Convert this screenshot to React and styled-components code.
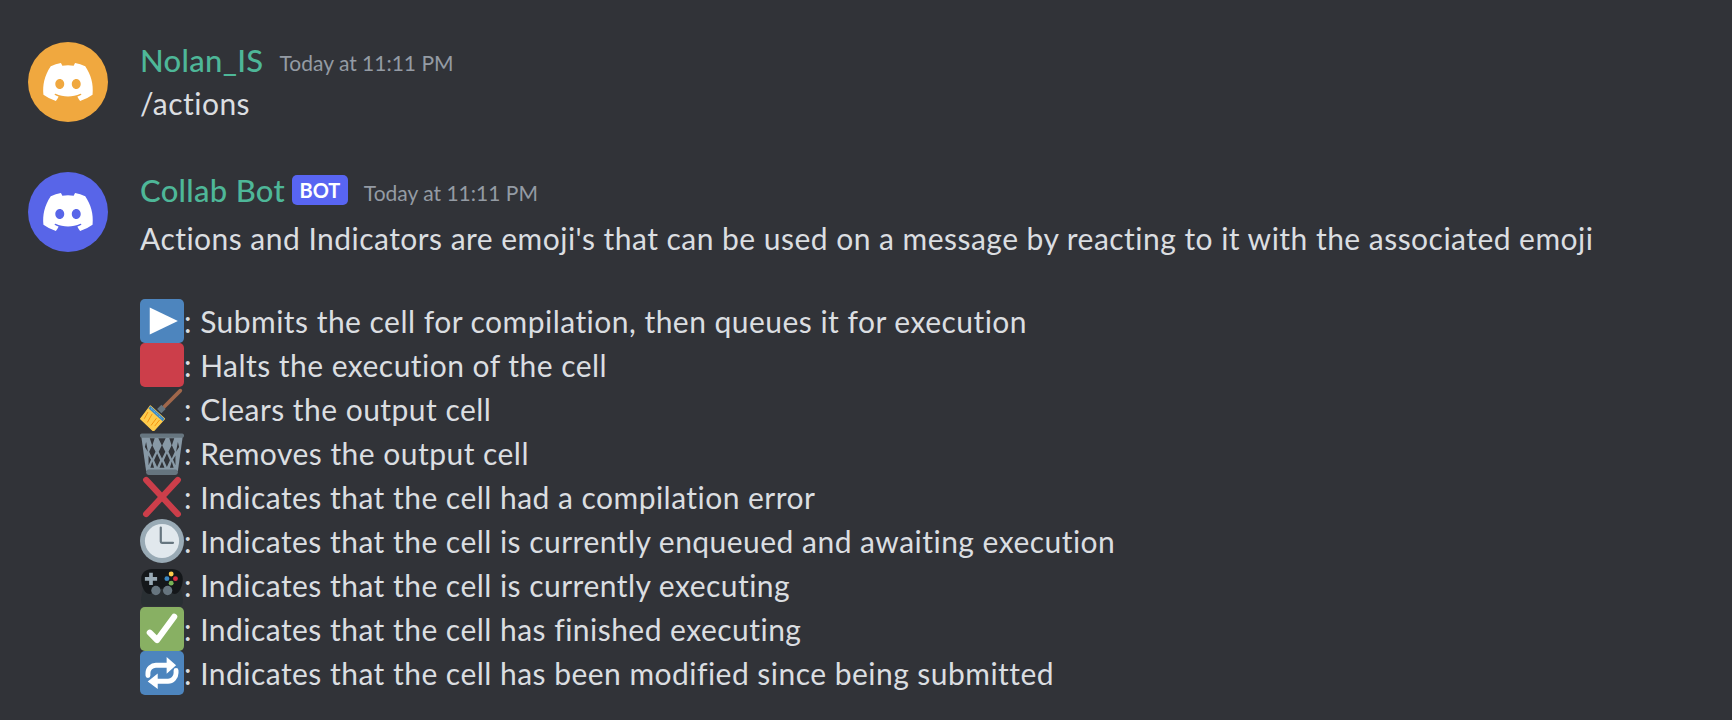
import styled, { createGlobalStyle } from "styled-components";
import { FaDiscord } from "react-icons/fa";

const Global = createGlobalStyle`
  html, body {
    margin: 0;
    padding: 0;
    background: #313338;
  }
`;

const Page = styled.main`
  width: 1732px;
  height: 720px;
  overflow: hidden;
  box-sizing: border-box;
  padding: 42px 0 0 28px;
  background: #313338;
  color: #dbdee1;
  font-family: Lato, "Noto Sans", sans-serif;
  display: flex;
  flex-direction: column;
  gap: 50px;
`;

const Message = styled.article`
  display: flex;
  gap: 32px;
  align-items: flex-start;
`;

const Avatar = styled.div`
  width: 80px;
  height: 80px;
  flex: none;
  border-radius: 50%;
  background: ${({ $color }) => $color};
  color: #fff;
  display: flex;
  align-items: center;
  justify-content: center;
`;

const Body = styled.div`
  display: flex;
  flex-direction: column;
`;

const Header = styled.div`
  display: flex;
  align-items: center;
  height: 36px;
  margin-bottom: ${({ $gap }) => $gap}px;
`;

const Name = styled.span`
  font-size: 31px;
  font-weight: 500;
  letter-spacing: 0.3px;
  color: #4eb798;
`;

const Badge = styled.span`
  margin-left: 7px;
  height: 30px;
  padding: 0 7.5px;
  border-radius: 5px;
  background: #5865f2;
  color: #fff;
  font-size: 20px;
  font-weight: 700;
  display: flex;
  align-items: center;
`;

const Time = styled.time`
  margin-left: 16px;
  margin-top: 4px;
  font-size: 21px;
  color: #949ba4;
`;

const Text = styled.div`
  font-size: 30px;
  line-height: 36px;
  letter-spacing: 0.47px;
  font-variant-ligatures: none;
  white-space: pre;
`;

const Row = styled(Text)`
  height: 44px;
  display: flex;
  align-items: center;
`;

const Actions = styled.div`
  margin-top: 43px;
  display: flex;
  flex-direction: column;
`;

const Emoji = styled.svg`
  width: 44px;
  height: 44px;
  flex: none;
`;

const Play = () => (
  <Emoji viewBox="0 0 36 36">
    <rect width="36" height="36" rx="4" fill="#4d85be" />
    <path d="M8 7v22l23-11z" fill="#fff" />
  </Emoji>
);

const Stop = () => (
  <Emoji viewBox="0 0 36 36">
    <rect width="36" height="36" rx="4" fill="#cc3e4a" />
  </Emoji>
);

const Broom = () => (
  <Emoji viewBox="0 0 36 36">
    <path d="M33 3L19 17" stroke="#a0674b" strokeWidth="3" strokeLinecap="round" fill="none" />
    <path d="M17.500 14.500l3.500 3.500-3.500 3.500-3.500-3.500z" fill="#66757f" />
    <path d="M8.500 15.500L20 26l-9 10L.500 26z" fill="#ffcc4d" stroke="#ffcc4d" strokeLinejoin="round" />
    <path d="M6.500 20.500L3.500 26M10 22l-4 7M13.500 25.500l-4.500 6M16 27l-4 5" stroke="#f4900c" strokeWidth=".8" fill="none" />
    <path d="M8.500 15.500L20 26l-1.500 2L7 17.500z" fill="#3b88c3" />
    <path d="M9 17.500l8.500 8" stroke="#88c9f9" strokeWidth=".7" strokeDasharray="1 .8" fill="none" />
  </Emoji>
);

const Trash = () => (
  <Emoji viewBox="0 0 36 36">
    <path d="M1 4h34l-4 29H5z" fill="#8899a6" />
    <path d="M8 6h4l-2 6zM15 6h6l-3 6zM24 6h4l-2 6zM5 9l1.500 8L4 13zM31 9l-1.500 8 2.500-4zM10 11.500l2.700 5.500-2.700 5.500L7.500 17zM18 11.500l2.700 5.500-2.700 5.500-2.700-5.500zM26 11.500l2.500 5.500-2.500 5.500-2.700-5.500zM14 18.500l2.500 5.500-2.500 5.500-2.500-5.500zM22 18.500l2.500 5.500-2.500 5.500-2.500-5.500zM7 20l2 3.500L7 28zM29 20l-2 3.500 2 4.500zM10 25l1.500 5h-3zM18 25l2 5h-4zM26 25l1.500 5h-3z" fill="#313338" />
    <rect x="0" y="2" width="36" height="3.500" rx="1.500" fill="#66757f" />
    <rect x="5" y="31.500" width="26" height="4.500" rx="2" fill="#66757f" />
  </Emoji>
);

const Cross = () => (
  <Emoji viewBox="0 0 36 36">
    <path d="M5 4l26 28M31 4L5 32" stroke="#cc3e4a" strokeWidth="5" strokeLinecap="round" fill="none" />
  </Emoji>
);

const Clock = () => (
  <Emoji viewBox="0 0 36 36">
    <circle cx="18" cy="18" r="18" fill="#99aab5" />
    <circle cx="18" cy="18" r="14" fill="#e1e8ed" />
    <path d="M17 7v11.500a1 1 0 0 0 1 1h9" fill="none" stroke="#66757f" strokeWidth="1.800" strokeLinecap="round" />
  </Emoji>
);

const Controller = () => (
  <Emoji viewBox="0 0 36 36">
    <path d="M3 20C1 26 0 32 2 35h32c2-3 1-9-1-15z" fill="#292f33" />
    <path d="M10 5h16c5 0 9 3 9 8 0 5-2 10-5 12-2 1-4 0-5-2l-1-2H12l-1 2c-1 2-3 3-5 2-3-2-5-7-5-12 0-5 4-8 9-8z" fill="#14171a" />
    <path d="M7.500 8h3v3.500H14v3h-3.500V18h-3v-3.500H4v-3h3.500z" fill="#99aab5" />
    <circle cx="25.500" cy="9" r="2" fill="#ffcc4d" />
    <circle cx="22" cy="12.800" r="2" fill="#3b88c3" />
    <circle cx="29" cy="12.800" r="2" fill="#dd2e44" />
    <circle cx="25.500" cy="16.500" r="2" fill="#77b255" />
    <circle cx="13" cy="22.500" r="3.800" fill="#66757f" />
    <circle cx="22.600" cy="22.500" r="3.800" fill="#66757f" />
  </Emoji>
);

const Check = () => (
  <Emoji viewBox="0 0 36 36">
    <rect width="36" height="36" rx="4" fill="#88b063" />
    <path d="M8 21l6 6L28 8" stroke="#fff" strokeWidth="5" strokeLinecap="round" strokeLinejoin="round" fill="none" />
  </Emoji>
);

const Repeat = () => (
  <Emoji viewBox="0 0 36 36">
    <rect width="36" height="36" rx="4" fill="#4d85be" />
    <path d="M6.500 20v-2c0-3.500 3-6.300 6.500-6.300h10M29.500 16v2c0 3.500-3 6.800-6.500 6.800H13" stroke="#fff" strokeWidth="4" fill="none" strokeLinecap="round" />
    <path d="M21.800 5l7.700 6.700-7.700 7zM14.500 18.500L6.300 25l8.200 6z" fill="#fff" />
  </Emoji>
);

const actions = [
  [Play, "Submits the cell for compilation, then queues it for execution"],
  [Stop, "Halts the execution of the cell"],
  [Broom, "Clears the output cell"],
  [Trash, "Removes the output cell"],
  [Cross, "Indicates that the cell had a compilation error"],
  [Clock, "Indicates that the cell is currently enqueued and awaiting execution"],
  [Controller, "Indicates that the cell is currently executing"],
  [Check, "Indicates that the cell has finished executing"],
  [Repeat, "Indicates that the cell has been modified since being submitted"],
];

const App = () => (
  <Page>
    <Global />
    <Message>
      <Avatar $color="#f0a83f">
        <FaDiscord size={54} />
      </Avatar>
      <Body>
        <Header $gap={7}>
          <Name>Nolan_IS</Name>
          <Time>Today at 11:11 PM</Time>
        </Header>
        <Text>/actions</Text>
      </Body>
    </Message>
    <Message>
      <Avatar $color="#5865e8">
        <FaDiscord size={54} />
      </Avatar>
      <Body>
        <Header $gap={12}>
          <Name>Collab Bot</Name>
          <Badge>BOT</Badge>
          <Time>Today at 11:11 PM</Time>
        </Header>
        <Text>Actions and Indicators are emoji's that can be used on a message by reacting to it with the associated emoji</Text>
        <Actions>
          {actions.map(([Icon, label]) => (
            <Row key={label}>
              <Icon />: {label}
            </Row>
          ))}
        </Actions>
      </Body>
    </Message>
  </Page>
);

export default App;
